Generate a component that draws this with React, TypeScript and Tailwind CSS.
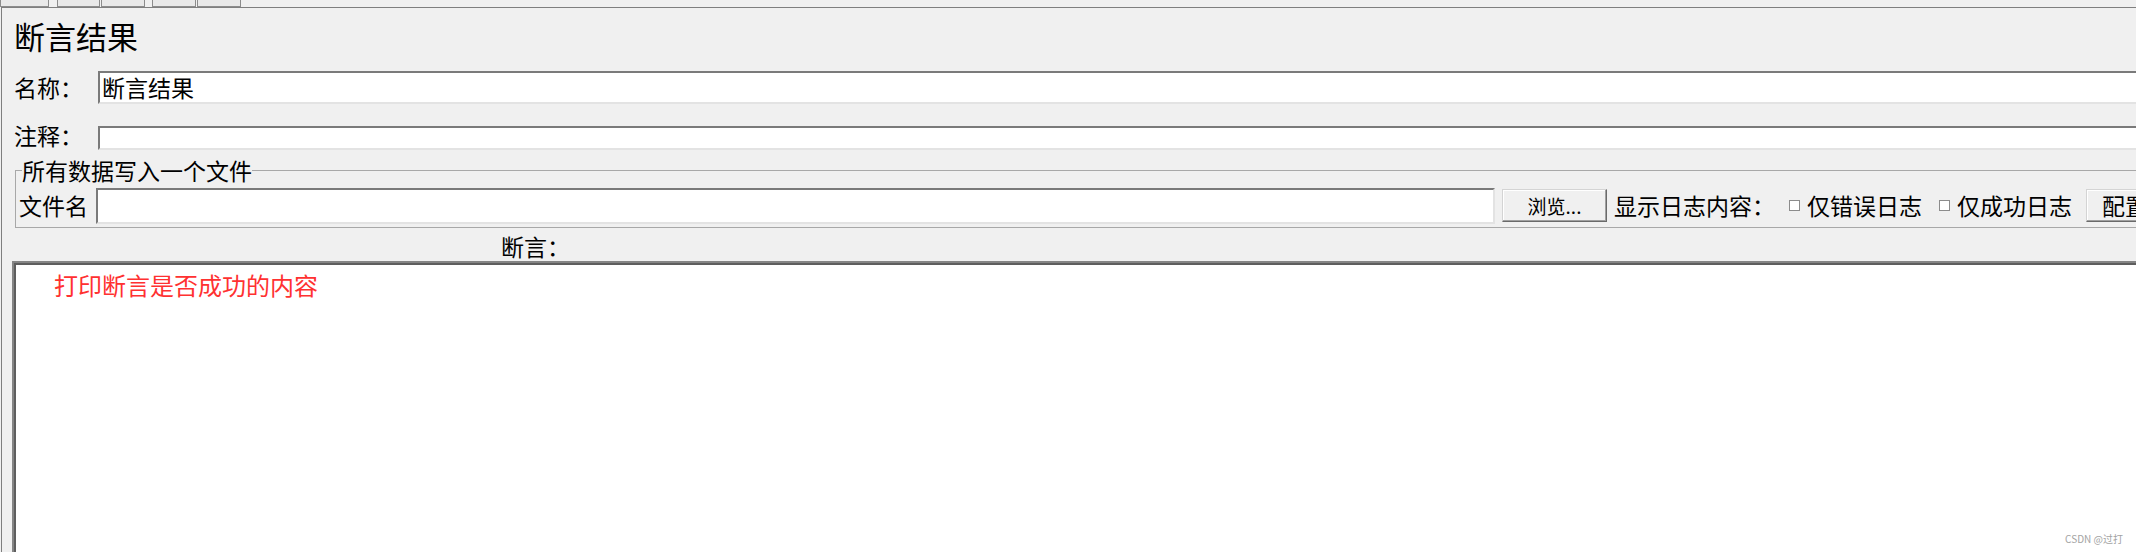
const toolButtons = [
  { key: "a", cls: "w-[49px]" },
  { key: "b", cls: "ml-[8px] w-[43px]" },
  { key: "c", cls: "ml-[1px] w-[44px]" },
  { key: "d", cls: "ml-[7px] w-[44px]" },
  { key: "e", cls: "ml-[1px] w-[44px]" },
];

function Checkbox() {
  return <span className="inline-block w-[11px] h-[11px] flex-none border border-[#8c8c8c] bg-white" />;
}

export default function App() {
  return (
    <div className="relative w-[2136px] h-[552px] overflow-hidden bg-[#f0f0f0] text-black font-['Noto_Sans_CJK_SC',sans-serif]">
      {/* toolbar buttons, cut off at the top */}
      <div className="flex h-[7px]">
        {toolButtons.map((b) => (
          <div
            key={b.key}
            className={`${b.cls} h-[7px] flex-none border border-t-0 border-[#8c8c8c] bg-[#e9e9e9]`}
          />
        ))}
      </div>

      <div className="ml-[1px] w-[2300px] h-[545px] flex flex-col border-t border-l border-[#7f7f7f] bg-[#f0f0f0]">
        <div className="mt-[8px] ml-[12px] h-[40px] leading-[40px] text-[31px]">断言结果</div>

        <div className="mt-[15px] flex items-center h-[33px]">
          <span className="ml-[12px] w-[84px] flex-none text-[23px] leading-none">名称：</span>
          <div className="flex-1 h-[33px] flex items-center pl-[2px] bg-white border-2 border-t-[#7a7a7a] border-l-[#7a7a7a] border-r-[#e3e3e3] border-b-[#e3e3e3] text-[23px] leading-none">
            断言结果
          </div>
        </div>

        <div className="mt-[22px] flex items-center h-[24px]">
          <span className="ml-[12px] w-[84px] flex-none pb-[6px] text-[23px] leading-none">注释：</span>
          <div className="flex-1 h-[24px] bg-white border-2 border-t-[#7a7a7a] border-l-[#7a7a7a] border-r-[#e3e3e3] border-b-[#e3e3e3]" />
        </div>

        <fieldset className="mt-[7px] ml-[13px] w-[2280px] flex-none border border-[#a8a8a8] px-[3px] pt-[4px] pb-[3px]">
          <legend className="ml-[3px] text-[23px] leading-[26px]">所有数据写入一个文件</legend>
          <div className="flex items-center h-[37px] text-[23px] leading-none whitespace-nowrap">
            <span className="w-[77px] flex-none">文件名</span>
            <div className="w-[1399px] h-[36px] flex-none bg-white border-2 border-t-[#7a7a7a] border-l-[#7a7a7a] border-r-[#e3e3e3] border-b-[#e3e3e3]" />
            <div className="ml-[7px] w-[105px] h-[33px] flex-none flex items-center justify-center bg-[#f0f0f0] border border-t-[#d4d4d4] border-l-[#d4d4d4] border-r-[#6a6a6a] border-b-[#6a6a6a] shadow-[inset_-1px_-1px_0_#a0a0a0,inset_1px_1px_0_#ffffff] text-[19px]">
              浏览...
            </div>
            <span className="ml-[7px]">显示日志内容：</span>
            <span className="ml-[14px] flex items-center">
              <Checkbox />
            </span>
            <span className="ml-[7px]">仅错误日志</span>
            <span className="ml-[17px] flex items-center">
              <Checkbox />
            </span>
            <span className="ml-[7px]">仅成功日志</span>
            <div className="ml-[14px] w-[100px] h-[33px] flex-none flex items-center pl-[15px] bg-[#f0f0f0] border border-t-[#d4d4d4] border-l-[#d4d4d4] border-r-[#6a6a6a] border-b-[#6a6a6a] shadow-[inset_-1px_-1px_0_#a0a0a0,inset_1px_1px_0_#ffffff]">
              配置
            </div>
          </div>
        </fieldset>

        <div className="mt-[5px] ml-[499px] h-[26px] leading-[26px] text-[23px]">断言：</div>

        <div className="mt-[2px] ml-[10px] flex-1 flex border-t-2 border-l-2 border-[#858585]">
          <div className="flex-1 border-t-2 border-l-2 border-[#5e5e5e] bg-white pl-[38px] pt-[5px]">
            <div className="h-[30px] leading-[30px] text-[24px] text-[#ff3131]">打印断言是否成功的内容</div>
          </div>
        </div>
      </div>

      <div className="absolute right-[13px] bottom-[6px] text-[10px] leading-[14px] text-[#a3a3a3]">CSDN @过打</div>
    </div>
  );
}
